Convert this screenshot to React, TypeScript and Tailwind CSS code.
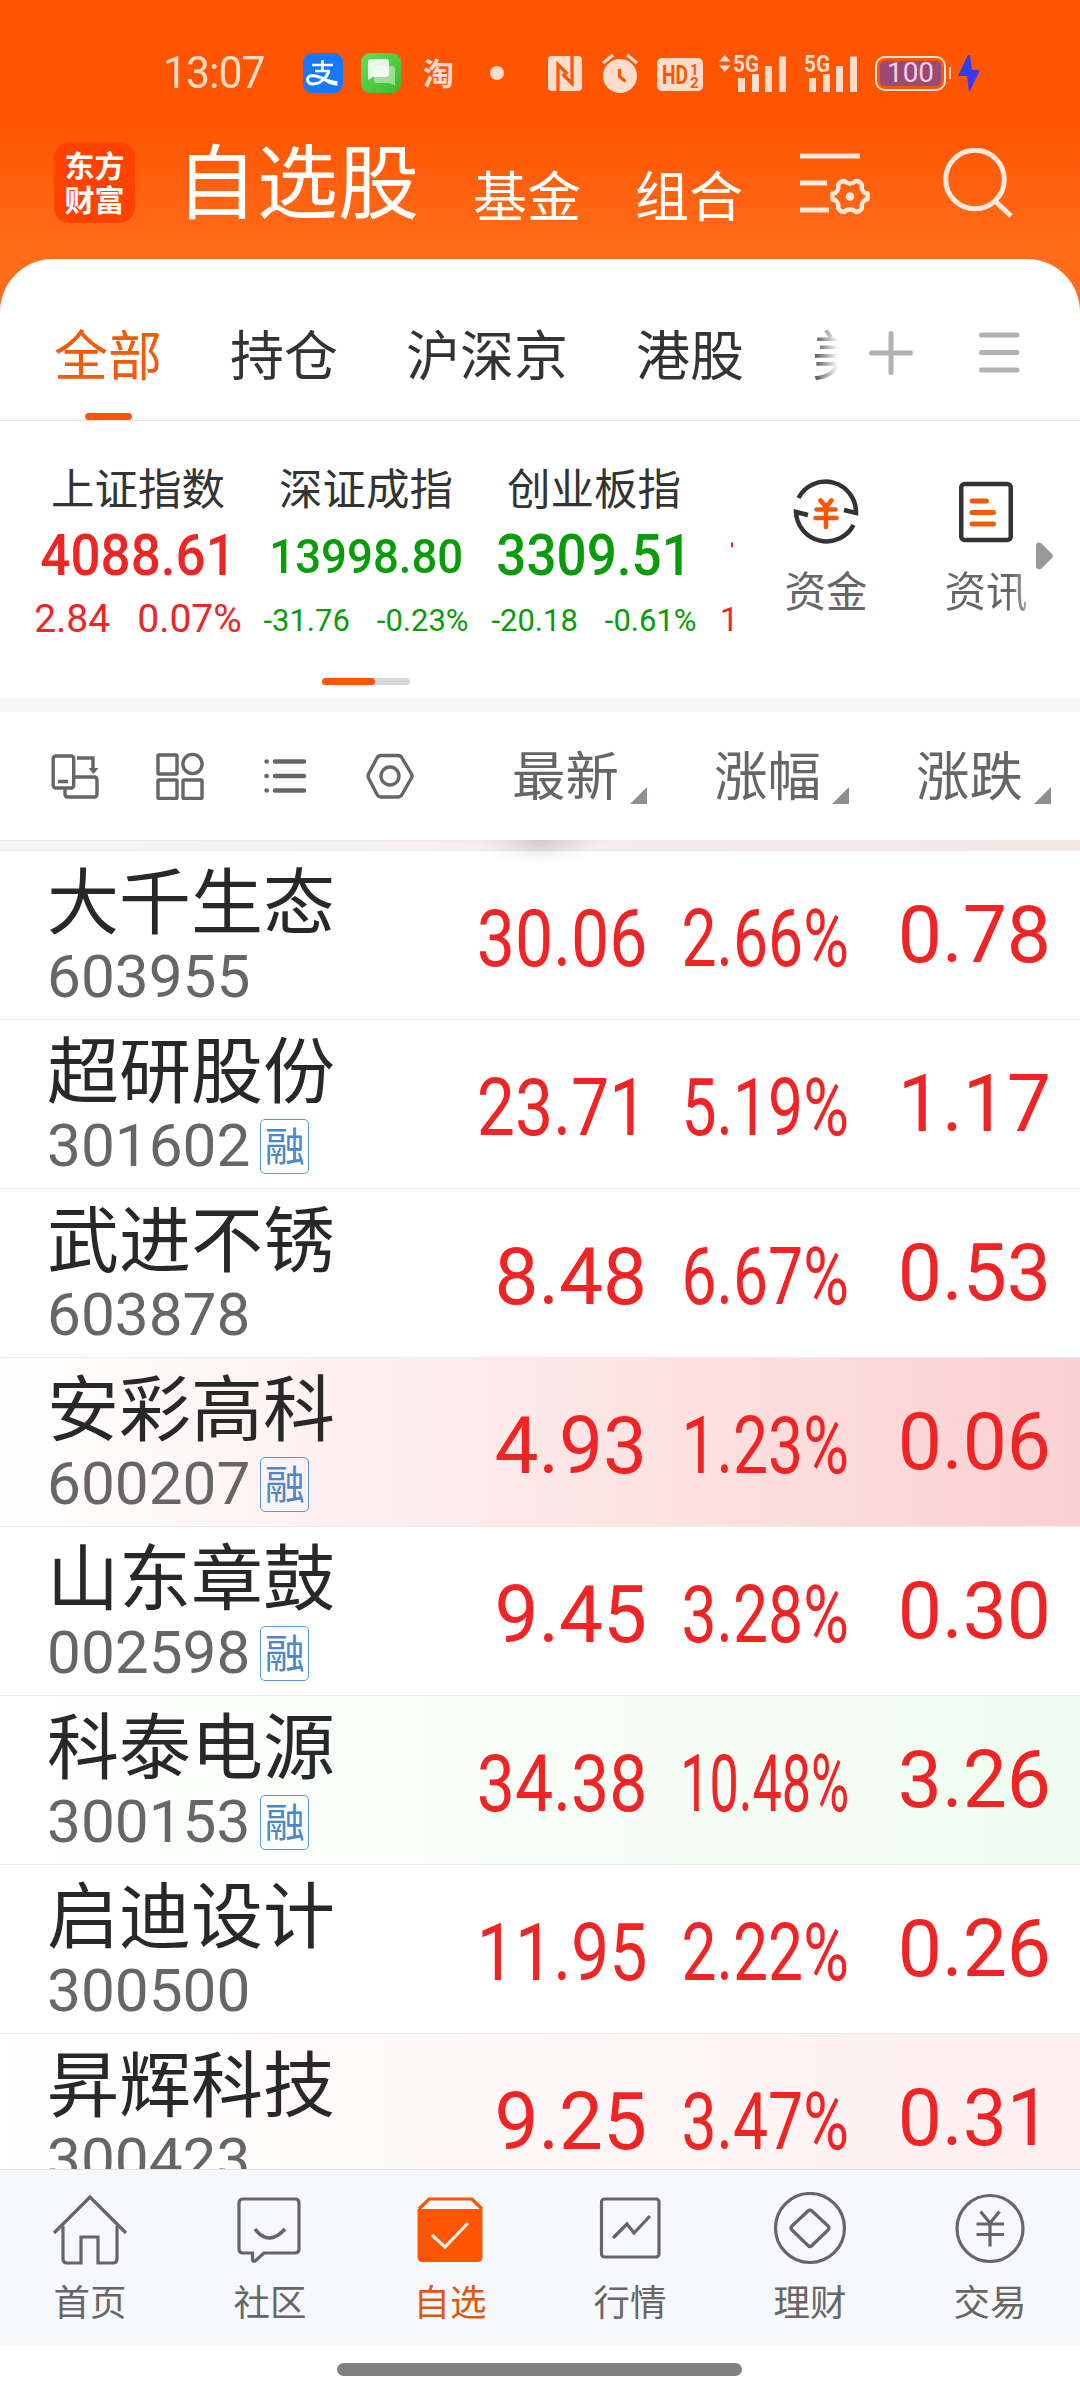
import type { ReactNode } from 'react';

const CJK = "font-['Noto_Sans_CJK_SC',sans-serif]";

const tabs = ['全部', '持仓', '沪深京', '港股', '美股'];

const indices = [
  { name: '上证指数', value: '4088.61', change: '2.84', pct: '0.07%', color: 'text-[#ee2525]', valueSize: 'text-[57px]', subSize: 'text-[39px]' },
  { name: '深证成指', value: '13998.80', change: '-31.76', pct: '-0.23%', color: 'text-[#089c08]', valueSize: 'text-[49px] pb-[3px]', subSize: 'text-[31px] pb-[3px]' },
  { name: '创业板指', value: '3309.51', change: '-20.18', pct: '-0.61%', color: 'text-[#089c08]', valueSize: 'text-[57px]', subSize: 'text-[31px] pb-[3px]' },
];

const stocks = [
  { name: '大千生态', code: '603955', price: '30.06', pct: '2.66%', diff: '0.78' },
  { name: '超研股份', code: '301602', margin: true, price: '23.71', pct: '5.19%', diff: '1.17' },
  { name: '武进不锈', code: '603878', price: '8.48', pct: '6.67%', diff: '0.53' },
  { name: '安彩高科', code: '600207', margin: true, price: '4.93', pct: '1.23%', diff: '0.06', bg: 'bg-linear-to-r from-white to-[#fbd0d0]' },
  { name: '山东章鼓', code: '002598', margin: true, price: '9.45', pct: '3.28%', diff: '0.30' },
  { name: '科泰电源', code: '300153', margin: true, price: '34.38', pct: '10.48%', diff: '3.26', bg: 'bg-linear-to-r from-white to-[#f0fcf0]' },
  { name: '启迪设计', code: '300500', price: '11.95', pct: '2.22%', diff: '0.26' },
  { name: '昇辉科技', code: '300423', price: '9.25', pct: '3.47%', diff: '0.31', bg: 'bg-linear-to-r from-white to-[#fdefef]' },
];

function App() {
  return (
    <div className="flex h-[2400px] w-[1080px] flex-col overflow-hidden bg-white font-['Roboto',sans-serif] leading-none">
      {/* Orange header */}
      <div className="h-[312px] shrink-0 bg-linear-to-b from-[#ff5500] from-40% to-[#ff6d1a] to-82%">
        <StatusBar />
        <Header />
      </div>

      {/* Rounded white sheet */}
      <div className="relative -mt-[53px] flex min-h-0 flex-1 flex-col rounded-t-[53px] bg-white">
        <TabBar />
        <IndexPanel />
        <div className="h-[14px] shrink-0 bg-[#f6f7fa]" />
        <Toolbar />
        <div className="relative h-[11px] shrink-0 border-y border-[#ececec] bg-linear-to-r from-[#f5f5f5] to-[#f5e5e5]">
          <div className="absolute -top-px left-[475px] h-[26px] w-[130px] bg-[radial-gradient(ellipse_at_top,rgba(80,70,70,0.2),rgba(80,70,70,0.03)_50%,transparent_70%)]" />
        </div>
        <div className="min-h-0 flex-1 overflow-hidden">
          {stocks.map((s) => (
            <StockRow key={s.code} {...s} />
          ))}
        </div>
        <BottomNav />
      </div>
    </div>
  );
}

const StatusBar = () => (
  <div className="flex h-[130px] items-center pt-[16px] pl-[163px] text-[#ffdccc]">
    <span className="w-[140px] origin-left scale-x-[0.97] text-[44px] tracking-[-1px]">13:07</span>

    <svg width="40" height="40" viewBox="0 0 40 40" fill="none">
      <rect width="40" height="40" rx="9" fill="#1677ff" />
      <path d="M9 12h21M19.500 7v10M12 18h15" stroke="#fff" strokeWidth="2.600" />
      <path d="M26 18c-2 6-8 13-16 13-7 0-7-8-1-8.500 8 0 14 6 25 7" stroke="#fff" strokeWidth="3" />
      <path d="M20 25c5 2 9 3.500 14.500 3.500v4c-6 0-10-2.500-14-5z" fill="#fff" />
    </svg>
    <svg width="40" height="40" viewBox="0 0 40 40" className="ml-[18px]">
      <defs>
        <linearGradient id="sms" x1="0" y1="0" x2="1" y2="1">
          <stop offset="0" stopColor="#62e05a" />
          <stop offset="1" stopColor="#3fb82c" />
        </linearGradient>
      </defs>
      <rect width="40" height="40" rx="9" fill="url(#sms)" />
      <path d="M13 16q0-3 3-3h15q3 0 3 3v17l-5-3H16q-3 0-3-3z" fill="#fff" opacity=".45" />
      <path d="M7 9q0-3 3-3h15q3 0 3 3v12q0 3-3 3H12l-5 3z" fill="#fff" opacity=".85" />
    </svg>
    <span className={`${CJK} -mt-[4px] ml-[22px] text-[31px] font-bold`}>淘</span>
    <i className="ml-[36px] size-[14px] rounded-full bg-[#ffdccc]" />

    {/* NFC */}
    <svg width="34" height="35" viewBox="0 0 34 35" className="ml-[44px]">
      <rect width="34" height="35" rx="4" fill="currentColor" />
      <path d="M10 35V8.500L19.500 18M24 0v27.500L14.500 18" fill="none" stroke="#ff5500" strokeWidth="3.200" />
    </svg>
    <svg width="36" height="39" viewBox="0 0 36 39" className="ml-[20px]">
      <circle cx="18" cy="22" r="17" fill="currentColor" />
      <path d="M1 9l10-8M35 9L25 1" stroke="currentColor" strokeWidth="3.200" />
      <path d="M17.500 15v7.500l6 5" fill="none" stroke="#ff5500" strokeWidth="3.200" />
    </svg>
    <span className="mt-[3px] ml-[19px] flex h-[33px] w-[46px] items-center justify-center rounded-[5px] bg-[#ffdccc] text-[#ff5500]">
      <svg width="46" height="32" viewBox="0 0 46 32" fill="currentColor" fontWeight="700">
        <text x="5" y="25" fontSize="25" textLength="26" lengthAdjust="spacingAndGlyphs">HD</text>
        <text x="33" y="15.500" fontSize="15">1</text>
        <text x="33" y="28.500" fontSize="15">2</text>
      </svg>
    </span>
    <Signal className="ml-[16px]" arrows />
    <Signal className="ml-[3px]" />

    <span className="relative ml-[17px] flex h-[35px] w-[71px] items-center justify-center rounded-[10px] border-[2.500px] border-[#ffe6d8]">
      <span className="flex h-[25px] w-[61px] items-center justify-center rounded-[5px] bg-[#9b4a78] text-[28px] text-[#f0cfe0]">100</span>
      <i className="absolute -right-[7px] h-[12px] w-[2px] bg-[#ffdccc]" />
    </span>
    <svg width="22" height="36" viewBox="0 0 22 36" className="ml-[12px]">
      <path d="M10 0L0 21h9l2 15h1l10-21h-8l-2-15z" fill="#2f3ef0" />
    </svg>
  </div>
);

const Signal = ({ arrows, className }: { arrows?: boolean; className: string }) => (
  <svg width="68" height="39" viewBox="0 0 68 39" className={className}>
    {arrows && <path d="M0 7.500L5.800 1l5.800 6.500zM0 11.500L5.800 18l5.800-6.500z" fill="currentColor" />}
    <text x="14" y="17.500" fontSize="23" fontWeight="700" textLength="26" lengthAdjust="spacingAndGlyphs" fill="currentColor">5G</text>
    <path d="M19 24h7v14h-7zM33 20h7v18h-7zM46 12h7v26h-7zM60 2.500h7v35.500h-7z" fill="currentColor" />
  </svg>
);

const Header = () => (
  <div className={`${CJK} flex items-start pl-[54px] text-white`}>
    <div className="mt-[12px] flex size-[81px] flex-col items-center rounded-[16px] bg-[#ff4200] pt-[5px] text-[30px] leading-[34px] font-bold">
      <span>东方</span>
      <span>财富</span>
    </div>
    <h1 className="mt-[6px] ml-[41px] text-[81px]">自选股</h1>
    <span className="mt-[37px] ml-[54px] text-[54px]">基金</span>
    <span className="mt-[37px] ml-[54px] text-[54px]">组合</span>
    <svg width="70" height="64" viewBox="0 0 70 64" className="mt-[23px] ml-[57px]" fill="none" stroke="#ffe9dc">
      <path d="M0 3h60M0 30h27M0 57h29" strokeWidth="5" />
      <path d="M50 30.500Q53.500 30.500 55.500 28Q60 28 62 32Q61 35.500 63 38Q65 41 67.500 40.500V46.500Q65 46 63 49Q61 51.500 62 55Q60 59 55.500 59Q53.500 56.500 50 56.500Q46.500 56.500 44.500 59Q40 59 38 55Q39 51.500 37 49Q35 46 32.500 46.500V40.500Q35 41 37 38Q39 35.500 38 32Q40 28 44.500 28Q46.500 30.500 50 30.500Z" strokeWidth="4.400" strokeLinejoin="round" />
      <circle cx="50" cy="43.500" r="4.300" fill="#ffe9dc" stroke="none" />
    </svg>
    <svg width="70" height="70" viewBox="0 0 70 70" className="mt-[18px] ml-[73px]" fill="none" stroke="#ffe9dc" strokeWidth="5">
      <circle cx="32" cy="31.500" r="29.300" />
      <path d="M52 53l16 15" />
    </svg>
  </div>
);

const TabBar = () => (
  <div className="flex h-[162px] shrink-0 items-start border-b border-[#e4e4e4]">
    <div className={`${CJK} flex h-[161px] w-[838px] gap-[68px] overflow-hidden pl-[54px] text-[54px] whitespace-nowrap text-[#333] mask-r-from-[810px] mask-r-to-[838px]`}>
      {tabs.map((t, i) => (
        <div key={t} className={`flex shrink-0 flex-col items-center pt-[67px] ${i === 0 ? 'text-[#f25a0c]' : ''}`}>
          {t}
          {i === 0 && <i className="mt-[33px] h-[7px] w-[47px] rounded-full bg-[#ff5500]" />}
        </div>
      ))}
    </div>
    <svg width="44" height="44" viewBox="0 0 44 44" className="mt-[72px] ml-[31px]" stroke="#b2b2b2" strokeWidth="5" strokeLinecap="round">
      <path d="M22 2.500v39M2.500 22h39" />
    </svg>
    <svg width="41" height="41" viewBox="0 0 41 41" className="mt-[73px] ml-[66px]" stroke="#b2b2b2" strokeWidth="5" strokeLinecap="round">
      <path d="M2.500 3h35.500M2.500 20.500h35.500M2.500 38h35.500" />
    </svg>
  </div>
);

const IndexPanel = () => (
  <div className="relative flex h-[277px] shrink-0 pl-[24px]">
    <div className="flex w-[709px] overflow-hidden pt-[44px]">
      {indices.map((x) => (
        <div key={x.name} className={`flex w-[228px] shrink-0 flex-col items-center ${x.color}`}>
          <span className={`${CJK} text-[43.500px] text-[#333]`}>{x.name}</span>
          <div className={`mt-[18px] flex h-[57px] scale-x-[0.93] items-end font-medium ${x.valueSize}`}>{x.value}</div>
          <div className={`mt-[15px] flex h-[40px] items-end gap-[27px] whitespace-nowrap ${x.subSize}`}>
            <span>{x.change}</span>
            <span>{x.pct}</span>
          </div>
        </div>
      ))}
      {/* Next index, mostly scrolled out */}
      <div className="flex w-[228px] shrink-0 flex-col pt-[61px] text-[#ee2525]">
        <div className="flex h-[57px] items-end pb-[3px] pl-[19px] text-[49px] font-medium">1</div>
        <div className="mt-[15px] flex h-[40px] items-end pb-[2px] pl-[12px] text-[33px]">1</div>
      </div>
    </div>

    <div className={`${CJK} ml-[12px] flex text-[41.500px] text-[#666]`}>
      <div className="flex w-[162px] flex-col items-center pt-[57px]">
        <svg width="68" height="68" viewBox="0 0 68 68" fill="none" stroke="#333" strokeWidth="4.500">
          <path d="M6.500 20A30.500 30.500 0 0 1 64 35L52 32" />
          <path d="M61.500 47A30.500 30.500 0 0 1 4 34L16 37" />
          <path d="M28.500 22.500l5.500 6.500 5.500-6.500M24.500 31.500h19M23.500 40h21M34 30v19" stroke="#ff5500" strokeWidth="4.600" strokeLinecap="round" strokeLinejoin="round" />
        </svg>
        <span className="mt-[23px]">资金</span>
      </div>
      <div className="flex w-[158px] flex-col items-center pt-[57px]">
        <svg width="54" height="68" viewBox="0 0 54 68" fill="none" stroke="#333" strokeWidth="4.500">
          <rect x="2.250" y="6" width="49.500" height="56" rx="3.500" />
          <path d="M13 23h14.500M13 34.500h21.500M13 46h21.500" stroke="#f25a0c" strokeWidth="5" strokeLinecap="round" />
        </svg>
        <span className="mt-[23px] bg-linear-to-r from-[#666] from-80% to-[#aaa] bg-clip-text text-transparent">资讯</span>
      </div>
    </div>
    <svg width="18" height="28" viewBox="0 0 18 28" className="absolute top-[121px] left-[1036px]">
      <path d="M0 4q0-5 5-3l11 11q2 2 0 4L5 27q-5 1-5-3z" fill="#999" />
    </svg>
    <div className="absolute bottom-[13px] left-[322px] h-[7px] w-[88px] rounded-full bg-[#d5d8db]">
      <div className="h-full w-[53px] rounded-full bg-[#ff5500]" />
    </div>
  </div>
);

const Toolbar = () => (
  <div className="flex h-[128px] shrink-0 items-start text-[#666]">
    <div className="flex w-[445px] items-start pt-[40px] pl-[51px]">
      <svg width="48" height="48" viewBox="0 0 48 48" fill="none" stroke="currentColor" strokeWidth="3.400">
        <rect x="2.200" y="4" width="20.500" height="32" rx="2.500" />
        <path d="M7 29.500h10M26 6h16v10M22.700 25H43q3 0 3 3v14q0 3-3 3H17q-3 0-3-3v-6" />
        <path d="M37.500 16h10L42.500 22z" fill="currentColor" stroke="none" />
      </svg>
      <svg width="48" height="48" viewBox="0 0 48 48" className="ml-[57px]" fill="none" stroke="currentColor" strokeWidth="3.400">
        <rect x="2" y="3" width="19" height="19" rx="1" />
        <circle cx="36.500" cy="12" r="9.600" />
        <rect x="2" y="28" width="19" height="18.500" rx="1" />
        <rect x="27" y="28" width="19" height="18.500" rx="1" />
      </svg>
      <svg width="43" height="48" viewBox="0 0 43 48" className="ml-[60px]" stroke="currentColor" strokeWidth="4.500" strokeLinecap="round">
        <path d="M11 9.500h29M11 24h29M11 38.500h29M2.500 9.500h.2M2.500 24h.2M2.500 38.500h.2" />
      </svg>
      <svg width="48" height="48" viewBox="0 0 48 48" className="ml-[59px]" fill="none" stroke="currentColor" strokeWidth="3.400">
        <path d="M15 3.500h17q2.500 0 4 2.500l9.500 16q1 2 0 4L36 42.500q-1.500 2.500-4 2.500H15q-2.500 0-4-2.500L2.500 26q-1-2 0-4L11 6q1.500-2.500 4-2.500z" />
        <circle cx="24" cy="24" r="9" />
      </svg>
    </div>
    <SortHead label="最新" />
    <SortHead label="涨幅" />
    <SortHead label="涨跌" />
  </div>
);

const SortHead = ({ label }: { label: string }) => (
  <div className="flex w-[202px] items-start justify-end gap-[11px] pt-[34px]">
    <span className={`${CJK} text-[53.500px]`}>{label}</span>
    <svg width="17" height="17" viewBox="0 0 17 17" className="mt-[41px]">
      <path d="M17 0v17H0z" fill="#8e8e93" />
    </svg>
  </div>
);

type Stock = { name: string; code: string; margin?: boolean; price: string; pct: string; diff: string; bg?: string };

const StockRow = ({ name, code, margin, price, pct, diff, bg = '' }: Stock) => (
  <div className={`flex h-[169px] items-start border-b border-[#ebebeb] text-[79px] whitespace-nowrap text-[#f02424] ${bg}`}>
    <div className="w-[447px] pt-[10px] pl-[47px]">
      <div className={`${CJK} h-[71px] text-[72px] text-[#282828]`}>{name}</div>
      <div className="mt-[11px] flex h-[60px] items-center text-[60px] text-[#666]">
        <span className="origin-left scale-x-[1.005] pt-[8px]">{code}</span>
        {margin && (
          <span className={`${CJK} mt-[9px] ml-[11px] flex h-[55px] w-[49px] shrink-0 justify-center rounded-[5px] border-[1.500px] border-[#5c97d8] pt-[4px] text-[40px] text-[#4a86c8]`}>融</span>
        )}
      </div>
    </div>
    <div className="flex w-[200px] justify-end pt-[49px]">
      <span className={`origin-right ${price.length > 4 ? 'scale-x-[0.86]' : 'scale-x-[0.99]'}`}>{price}</span>
    </div>
    <div className="flex w-[202px] justify-end pt-[49px]">
      <span className={`origin-right ${pct.length > 5 ? 'scale-x-[0.66]' : 'scale-x-[0.79]'}`}>{pct}</span>
    </div>
    <div className="flex w-[202px] justify-end pt-[45px]">
      <span className="origin-right scale-x-[0.995]">{diff}</span>
    </div>
  </div>
);

const BottomNav = () => (
  <div className="flex h-[231px] shrink-0 flex-col bg-white">
    <div className="flex h-[177px] border-t border-[#e2e2e4] bg-[#f7f8fb]">
      <NavItem label="首页">
        <path d="M2 41L38 5l36 36" />
        <path d="M11 34v33q0 4 4 4h14V45h17v26h15q4 0 4-4V34" />
      </NavItem>
      <NavItem label="社区">
        <path d="M11 7h52q4 0 4 4v46q0 4-4 4H32l-9 8q-2.500 1-2.500-2v-6H11q-4 0-4-4V11q0-4 4-4z" />
        <path d="M23 37q14 18 30 0" strokeWidth="3.600" />
      </NavItem>
      <NavItem label="自选" active>
        <path d="M7 17L17 7h43l10 10" />
        <path d="M5.500 17h65v48q0 5-5 5h-55q-5 0-5-5z" fill="currentColor" stroke="none" />
        <path d="M20 43l13 12 23-24" stroke="#fff3ea" />
      </NavItem>
      <NavItem label="行情">
        <rect x="9.500" y="7" width="57.500" height="58" rx="3" />
        <path d="M21 46l14-14 7 9 16-17" />
      </NavItem>
      <NavItem label="理财">
        <circle cx="38" cy="36" r="34.500" />
        <path d="M36 19q2-2 4 0l16 15q2 2 0 4L40 53.500q-2 2-4 0L20 38q-2-2 0-4z" />
      </NavItem>
      <NavItem label="交易">
        <circle cx="38" cy="36.500" r="33" />
        <path d="M28.500 19.500L38 31l9.500-11.500M24.500 32h27.500M24.500 42.500h27.500M38 31v23.500" />
      </NavItem>
    </div>
    <div className="mt-[17px] ml-[337px] h-[13px] w-[405px] rounded-full bg-[#808080]" />
  </div>
);

const NavItem = ({ label, active, children }: { label: string; active?: boolean; children: ReactNode }) => (
  <div className={`flex flex-1 flex-col items-center pt-[22px] ${active ? 'text-[#ff5500]' : 'text-[#666]'}`}>
    <svg width="76" height="74" viewBox="0 0 76 74" fill="none" stroke="currentColor" strokeWidth="3.200">
      {children}
    </svg>
    <span className={`${CJK} mt-[17px] text-[36.500px] ${active ? 'text-[#e0560f]' : ''}`}>{label}</span>
  </div>
);

export default App;
